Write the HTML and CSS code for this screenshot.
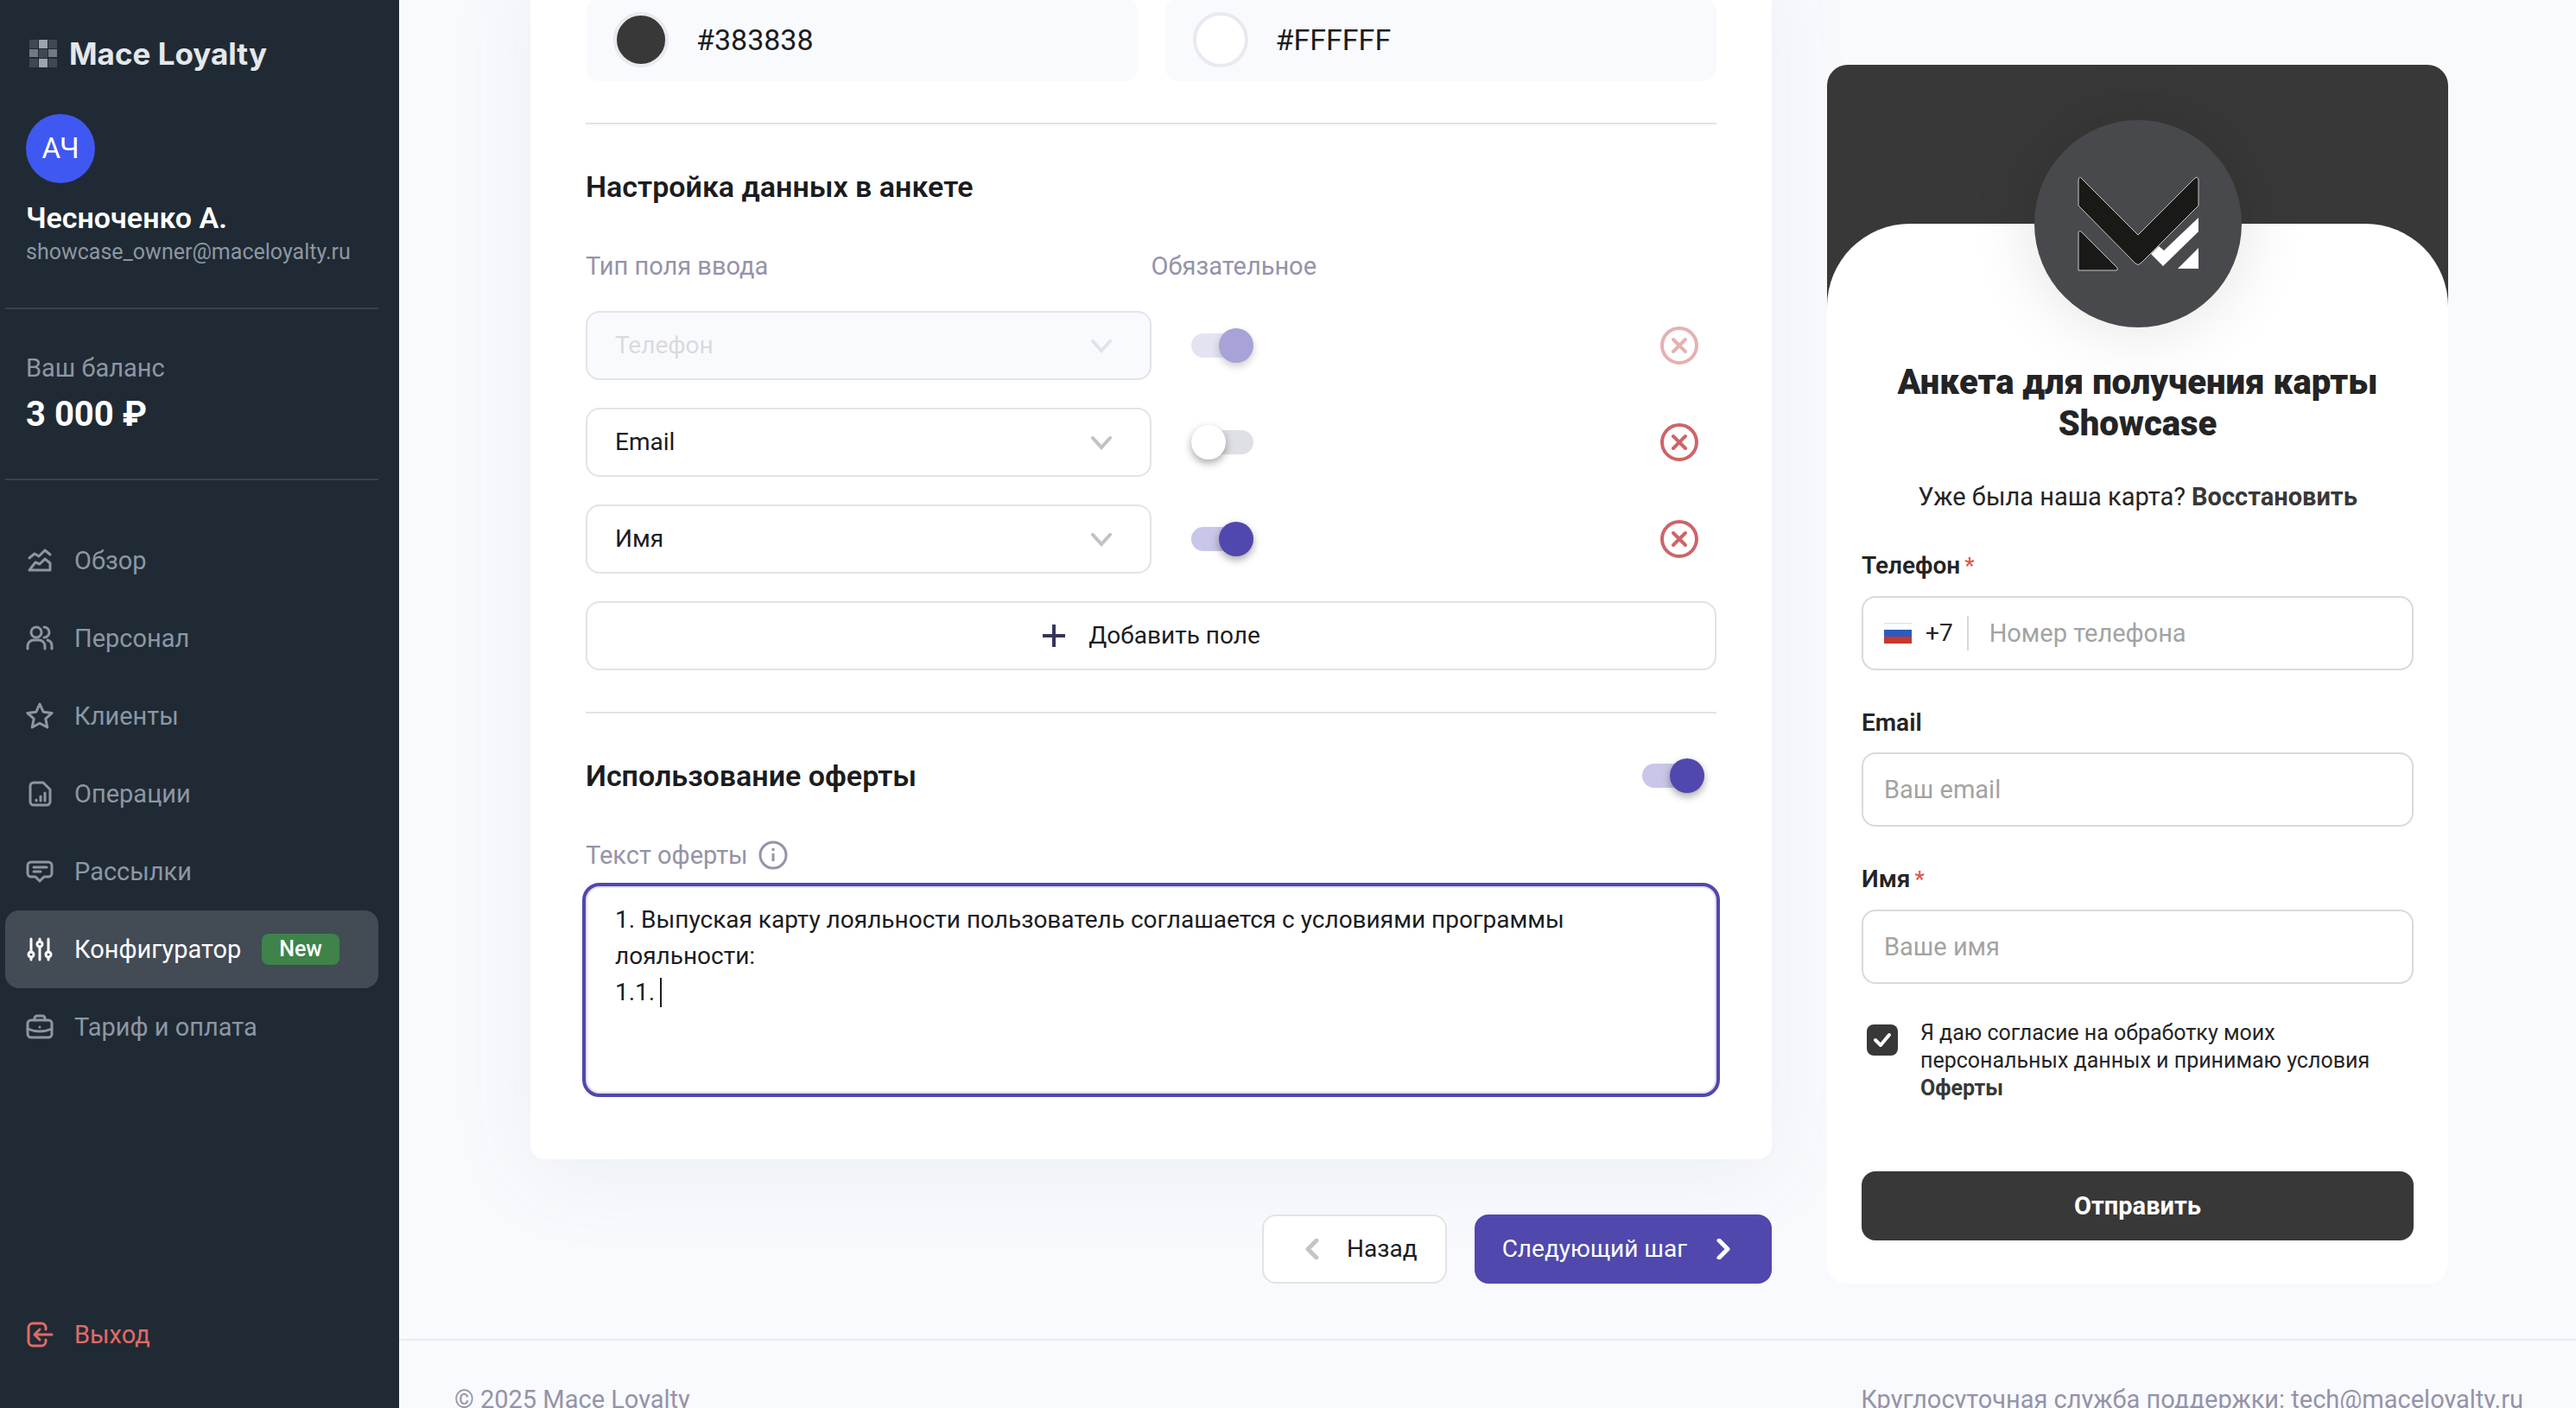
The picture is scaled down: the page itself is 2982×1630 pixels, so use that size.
FILE: index.html
```html
<!DOCTYPE html>
<html lang="ru">
<head>
    <meta charset="UTF-8">
    <meta name="viewport" content="width=device-width, initial-scale=1.0">
    <title>Mace Loyalty</title>
    <link rel="stylesheet" href="styles.css">
</head>
<body>
    <aside class="sidebar">
        <a href="#" class="logo">
            <svg width="32" height="32" viewBox="0 0 32 32">
                <g opacity="0.25">
                    <rect x="0" y="0" width="10" height="10"/>
                    <rect x="22" y="0" width="10" height="10"/>
                    <rect x="11" y="11" width="10" height="10"/>
                    <rect x="0" y="22" width="10" height="10"/>
                    <rect x="22" y="22" width="10" height="10"/>
                </g>
                <g opacity="0.65">
                    <rect x="0" y="11" width="10" height="9"/>
                    <rect x="22" y="11" width="10" height="9"/>
                </g>
                <rect x="11" y="0" width="10" height="10"/>
                <rect x="11" y="22" width="10" height="10"/>
            </svg>
            <span>Mace Loyalty</span>
        </a>

        <div class="profile">
            <div class="avatar">АЧ</div>
            <div class="profile-name">Чесноченко А.</div>
            <div class="profile-email">showcase_owner@maceloyalty.ru</div>
        </div>

        <div class="balance">
            <div class="balance-label">Ваш баланс</div>
            <div class="balance-value">3 000 ₽</div>
        </div>

        <nav class="menu">
            <a href="#" class="menu-item">
                <svg class="icon" viewBox="0 0 32 32"><path d="M4 13l6-5 5 3 7-7 6 5M4 27l7-9 5 2 6-6 6 5v8z"/></svg>
                <span>Обзор</span>
            </a>
            <a href="#" class="menu-item">
                <svg class="icon" viewBox="0 0 32 32"><circle cx="12" cy="9" r="6"/><path d="M2 28v-3a7 7 0 0 1 7-7h6a7 7 0 0 1 7 7v3M21 3a6 6 0 0 1 0 12M25 18a7 7 0 0 1 5 7v3"/></svg>
                <span>Персонал</span>
            </a>
            <a href="#" class="menu-item">
                <svg class="icon" viewBox="0 0 32 32"><path d="M16 2l4.200 9.200 10 1.200-7.400 6.800 2 9.800-8.800-4.800-8.800 4.800 2-9.800-7.400-6.800 10-1.200z"/></svg>
                <span>Клиенты</span>
            </a>
            <a href="#" class="menu-item">
                <svg class="icon" viewBox="0 0 32 32"><path d="M9 3h11l8 8v14a4 4 0 0 1-4 4H9a4 4 0 0 1-4-4V7a4 4 0 0 1 4-4zM12 23v1M17 19v5M22 15v9"/></svg>
                <span>Операции</span>
            </a>
            <a href="#" class="menu-item">
                <svg class="icon" viewBox="0 0 32 32"><path d="M6 5h20a4 4 0 0 1 4 4v9a4 4 0 0 1-4 4h-5l-5 5-5-5H6a4 4 0 0 1-4-4V9a4 4 0 0 1 4-4zM9 11h15M9 16h8"/></svg>
                <span>Рассылки</span>
            </a>
            <a href="#" class="menu-item active">
                <svg class="icon" viewBox="0 0 32 32"><path d="M6 4v15M16 13v15M26 4v15M6 25v3M26 25v3M16 4v3"/><circle cx="6" cy="22" r="3"/><circle cx="16" cy="10" r="3"/><circle cx="26" cy="22" r="3"/></svg>
                <span>Конфигуратор</span>
                <span class="badge">New</span>
            </a>
            <a href="#" class="menu-item">
                <svg class="icon" viewBox="0 0 32 32"><rect x="2" y="8" width="28" height="20" rx="4"/><path d="M10 8V6a3 3 0 0 1 3-3h6a3 3 0 0 1 3 3v2M2 18c9 4 19 4 28 0M16 16v0"/></svg>
                <span>Тариф и оплата</span>
            </a>
        </nav>

        <a href="#" class="menu-item logout">
            <svg class="icon" viewBox="0 0 32 32"><path d="M23 10V8a5 5 0 0 0-5-5H8a5 5 0 0 0-5 5v16a5 5 0 0 0 5 5h10a5 5 0 0 0 5-5v-2M30 16H11M16 10l-6 6 6 6"/></svg>
            <span>Выход</span>
        </a>
    </aside>

    <div class="page">
        <main class="content">
            <div class="editor">
                <section class="card">
                    <div class="colors">
                        <div class="color">
                            <span class="color-dot dark"></span>
                            <span>#383838</span>
                        </div>
                        <div class="color">
                            <span class="color-dot light"></span>
                            <span>#FFFFFF</span>
                        </div>
                    </div>

                    <div class="section">
                        <h2>Настройка данных в анкете</h2>
                        <div class="fields">
                            <div class="field-row field-head">
                                <span>Тип поля ввода</span>
                                <span>Обязательное</span>
                            </div>
                            <div class="field-row">
                                <div class="select">
                                    <select aria-label="Тип поля ввода" disabled><option>Телефон</option></select>
                                    <svg class="chevron" viewBox="0 0 24 16"><path d="M2 2l10 11L22 2"/></svg>
                                </div>
                                <input type="checkbox" class="switch" aria-label="Обязательное" checked disabled>
                                <button class="remove" aria-label="Удалить" disabled>
                                    <svg viewBox="0 0 44 44"><circle cx="22" cy="22" r="20"/><path d="M15 15l14 14M29 15L15 29"/></svg>
                                </button>
                            </div>
                            <div class="field-row">
                                <div class="select">
                                    <select aria-label="Тип поля ввода"><option>Email</option></select>
                                    <svg class="chevron" viewBox="0 0 24 16"><path d="M2 2l10 11L22 2"/></svg>
                                </div>
                                <input type="checkbox" class="switch" aria-label="Обязательное">
                                <button class="remove" aria-label="Удалить">
                                    <svg viewBox="0 0 44 44"><circle cx="22" cy="22" r="20"/><path d="M15 15l14 14M29 15L15 29"/></svg>
                                </button>
                            </div>
                            <div class="field-row">
                                <div class="select">
                                    <select aria-label="Тип поля ввода"><option>Имя</option></select>
                                    <svg class="chevron" viewBox="0 0 24 16"><path d="M2 2l10 11L22 2"/></svg>
                                </div>
                                <input type="checkbox" class="switch" aria-label="Обязательное" checked>
                                <button class="remove" aria-label="Удалить">
                                    <svg viewBox="0 0 44 44"><circle cx="22" cy="22" r="20"/><path d="M15 15l14 14M29 15L15 29"/></svg>
                                </button>
                            </div>
                            <button class="btn add">
                                <svg width="28" height="28" viewBox="0 0 28 28"><path d="M14 1v26M1 14h26" stroke="#353659"/></svg>
                                Добавить поле
                            </button>
                        </div>
                    </div>

                    <div class="section">
                        <div class="section-title">
                            <h2><label for="offer-on">Использование оферты</label></h2>
                            <input type="checkbox" class="switch" id="offer-on" checked>
                        </div>
                        <div class="offer-label">
                            <label for="offer">Текст оферты</label>
                            <svg width="34" height="34" viewBox="0 0 34 34"><circle cx="17" cy="17" r="15"/><path d="M17 15v9M17 9v3"/></svg>
                        </div>
                        <div class="offer-box">
                            <textarea id="offer">1. Выпуская карту лояльности пользователь соглашается с условиями программы лояльности:
1.1. </textarea>
                            <span class="caret"></span>
                        </div>
                    </div>
                </section>

                <div class="actions">
                    <button class="btn back">
                        <svg width="16" height="24" viewBox="0 0 16 24"><path d="M13 2L3 12l10 10" stroke="#c4c4cc"/></svg>
                        Назад
                    </button>
                    <button class="btn next">
                        Следующий шаг
                        <svg width="16" height="24" viewBox="0 0 16 24"><path d="M3 2l10 10L3 22" stroke="#fff"/></svg>
                    </button>
                </div>
            </div>

            <form class="preview">
                <div class="preview-header"></div>
                <div class="preview-body">
                    <div class="brand">
                        <svg viewBox="0 0 240 240">
                            <g fill="#191a18" stroke="#c9c9c9" stroke-width="1" stroke-linejoin="round">
                                <path d="M51 69q1-5 4-1l65 65 65-65q4-4 5 1v30l-67 67q-3 3-6 0L51 99z"/>
                                <path d="M51 130q1-3 3-1l42 42q1 3-1 3H51z"/>
                            </g>
                            <g fill="#fff">
                                <path d="M190 113v16l-41 40-14-14 9-9 6 5z"/>
                                <path d="M190 148v24h-24z"/>
                            </g>
                        </svg>
                    </div>
                    <h1>Анкета для получения карты Showcase</h1>
                    <p class="restore">Уже была наша карта? <a href="#">Восстановить</a></p>

                    <div class="form-field">
                        <label for="phone">Телефон<span class="star">*</span></label>
                        <div class="phone">
                            <svg width="32" height="24" viewBox="0 0 32 24"><path d="M0 0h32v1H0z" fill="#dcdce8"/><path d="M0 8h32v8H0z" fill="#2c5bbd"/><path d="M0 16h32v8H0z" fill="#c8372d"/></svg>
                            <span class="code">+7</span>
                            <input type="tel" id="phone" placeholder="Номер телефона">
                        </div>
                    </div>
                    <div class="form-field">
                        <label for="email">Email</label>
                        <input type="email" id="email" class="input" placeholder="Ваш email">
                    </div>
                    <div class="form-field">
                        <label for="name">Имя<span class="star">*</span></label>
                        <input type="text" id="name" class="input" placeholder="Ваше имя">
                    </div>

                    <div class="agree">
                        <span class="check">
                            <input type="checkbox" id="agree" checked>
                            <svg viewBox="0 0 36 36"><path d="M10 18l6 6 10-12"/></svg>
                        </span>
                        <label for="agree">Я даю согласие на обработку моих персональных данных и принимаю условия <a href="#">Оферты</a></label>
                    </div>

                    <button type="button" class="submit">Отправить</button>
                </div>
            </form>
        </main>

        <footer class="footer">
            <span>© 2025 Mace Loyalty</span>
            <span>Круглосуточная служба поддержки: <a href="mailto:tech@maceloyalty.ru">tech@maceloyalty.ru</a></span>
        </footer>
    </div>
</body>
</html>
```
FILE: styles.css
```css
* {
    box-sizing: border-box;
}
body {
    margin: 0;
    display: flex;
    height: 100vh;
    overflow: hidden;
    background-color: #f9fafe;
    color: #1b1c1e;
    font-family: Roboto, "Noto Sans", sans-serif;
    font-size: 28px;
    line-height: 32px;
}
a {
    color: inherit;
    text-decoration: none;
}
button, input, select, textarea {
    font: inherit;
    color: inherit;
}
h1, h2, p {
    margin: 0;
}
svg {
    display: block;
    fill: none;
    flex-shrink: 0;
}

/* sidebar */
.sidebar {
    width: 462px;
    flex-shrink: 0;
    height: 100vh;
    padding: 40px 24px 40px 6px;
    display: flex;
    flex-direction: column;
    background-color: #202a34;
    color: #8c97a3;
}
.logo {
    display: flex;
    align-items: center;
    gap: 14px;
    height: 44px;
    padding-left: 28px;
    color: #e4e7eb;
    font-family: Inter, sans-serif;
    font-size: 35px;
    font-weight: 700;
}
.logo svg {
    fill: #9aa5b1;
}
.profile {
    padding: 48px 0 48px 24px;
    border-bottom: 2px solid #37424c;
}
.avatar {
    display: flex;
    align-items: center;
    justify-content: center;
    width: 80px;
    height: 80px;
    border-radius: 50%;
    background-color: #4058f2;
    color: #fff;
    font-size: 33px;
}
.profile-name {
    margin-top: 20px;
    color: #fff;
    font-size: 34px;
    font-weight: 600;
    line-height: 40px;
}
.profile-email {
    margin-top: 4px;
    font-size: 25px;
}
.balance {
    padding: 48px 0 48px 24px;
    border-bottom: 2px solid #37424c;
}
.balance-label {
    line-height: 40px;
    font-size: 29px;
}
.balance-value {
    margin: 10px 0 2px;
    color: #fff;
    font-size: 40px;
    font-weight: 700;
    line-height: 48px;
}
.menu {
    margin-top: 48px;
}
.menu-item {
    display: flex;
    align-items: center;
    height: 90px;
    padding-left: 24px;
    border-radius: 16px;
    font-size: 29px;
}
.icon {
    width: 32px;
    height: 32px;
    margin-right: 24px;
    stroke: currentColor;
    stroke-width: 3;
    stroke-linecap: round;
    stroke-linejoin: round;
}
.menu-item.active {
    background-color: #434b55;
    color: #fff;
}
.badge {
    margin-left: 24px;
    padding: 0 20px;
    border-radius: 8px;
    background-color: #3f834a;
    font-size: 25px;
    font-weight: 500;
    line-height: 36px;
}
.logout {
    margin-top: auto;
    color: #e26a66;
}

/* main */
.page {
    flex: 1;
    min-width: 0;
}
.content {
    display: flex;
    align-items: flex-end;
    gap: 64px;
    max-width: 2224px;
    margin: -66px auto 0;
    padding-left: 4px;
}
.editor {
    flex: 1;
    min-width: 0;
}
.card {
    padding: 64px 64px 76px;
    border-radius: 16px;
    background-color: #fff;
    box-shadow: 0 20px 100px rgba(60, 100, 120, 0.08);
}
.colors {
    display: grid;
    grid-template-columns: 1fr 1fr;
    gap: 32px;
}
.color {
    display: flex;
    align-items: center;
    gap: 32px;
    height: 96px;
    padding: 0 32px;
    border-radius: 16px;
    background-color: #f9fafe;
    font-size: 34px;
}
.color-dot {
    width: 64px;
    height: 64px;
    border: 4px solid #e9e9ef;
    border-radius: 50%;
}
.dark {
    background-color: #383838;
}
.light {
    background-color: #fff;
}
.section {
    margin-top: 48px;
    padding-top: 52px;
    border-top: 2px solid #e3e3e5;
}
h2 {
    font-size: 34px;
    font-weight: 600;
    line-height: 40px;
}
.fields {
    display: flex;
    flex-direction: column;
    gap: 32px;
    margin-top: 56px;
}
.field-row {
    display: grid;
    grid-template-columns: 1fr 1fr;
    align-items: center;
    position: relative;
}
.field-head {
    margin-bottom: 4px;
    color: #9593a9;
    font-size: 29px;
}
.select {
    position: relative;
}
.select select {
    appearance: none;
    width: 100%;
    height: 80px;
    padding: 0 32px;
    border: 2px solid #e3e3e8;
    border-radius: 16px;
    background-color: #fff;
}
.select select:disabled {
    background-color: #f9fafe;
    color: #d9dade;
    opacity: 1;
}
.chevron {
    position: absolute;
    right: 46px;
    top: 33px;
    width: 24px;
    height: 16px;
    stroke: #c1c1c9;
    stroke-width: 4;
    stroke-linecap: round;
    pointer-events: none;
}
select:disabled + .chevron {
    opacity: 0.4;
}
.switch {
    appearance: none;
    position: relative;
    width: 72px;
    height: 28px;
    margin: 0 0 0 46px;
    border-radius: 14px;
    background-color: #dfdfe6;
}
.switch::before {
    content: "";
    position: absolute;
    left: 0;
    top: -6px;
    width: 40px;
    height: 40px;
    border-radius: 50%;
    background-color: #fff;
    box-shadow: 0 4px 10px rgba(0, 0, 0, 0.35);
}
.switch:checked {
    background-color: #c9c7e7;
}
.switch:checked::before {
    left: auto;
    right: 0;
    background-color: #5048ad;
}
.switch:disabled {
    background-color: #e4e3f1;
}
.switch:disabled::before {
    background-color: #a7a3d8;
    box-shadow: 0 4px 10px rgba(0, 0, 0, 0.2);
}
.remove {
    position: absolute;
    right: 21px;
    width: 44px;
    height: 44px;
    padding: 0;
    border: none;
    background: none;
}
.remove svg {
    stroke: #ce6468;
    stroke-width: 4;
    stroke-linecap: round;
}
.remove:disabled {
    opacity: 0.5;
}
.btn {
    display: flex;
    align-items: center;
    justify-content: center;
    height: 80px;
    border: 2px solid #e3e3e5;
    border-radius: 16px;
    background-color: #fff;
    color: #1b1c1e;
}
.btn svg {
    stroke-width: 5;
    stroke-linecap: round;
    stroke-linejoin: round;
}
.add {
    gap: 26px;
}
.add svg {
    stroke-width: 4;
    stroke-linecap: butt;
}
.section-title {
    display: flex;
    align-items: center;
    justify-content: space-between;
}
.section-title .switch {
    margin-right: 14px;
}
.offer-label {
    display: flex;
    align-items: center;
    gap: 12px;
    height: 32px;
    margin-top: 56px;
    color: #9593a9;
    font-size: 29px;
}
.offer-label svg {
    stroke: #9593a9;
    stroke-width: 3;
}
.offer-box {
    position: relative;
    margin-top: 20px;
}
textarea {
    display: block;
    width: 100%;
    height: 240px;
    padding: 16px 100px 16px 32px;
    border: 2px solid #e0dff0;
    border-radius: 16px;
    outline: 4px solid #5048ad;
    background-color: #fff;
    line-height: 42px;
    resize: none;
}
.caret {
    position: absolute;
    left: 86px;
    top: 106px;
    width: 2px;
    height: 34px;
    background-color: #1b1c1e;
}
.actions {
    display: flex;
    justify-content: flex-end;
    gap: 32px;
    margin-top: 64px;
}
.back {
    gap: 32px;
    padding: 0 32px 0 48px;
}
.next {
    gap: 34px;
    padding: 0 46px 0 30px;
    border-color: #5048ad;
    background-color: #5048ad;
    color: #fff;
}

/* preview of the form */
.preview {
    width: 719px;
    border-radius: 24px;
    background: linear-gradient(#383838 300px, #fff 300px);
    overflow: hidden;
    color: #242424;
}
.preview-header {
    height: 184px;
}
.preview-body {
    display: flex;
    flex-direction: column;
    padding: 0 40px 50px;
    border-radius: 96px 96px 0 0;
    background-color: #fff;
}
.brand {
    align-self: center;
    width: 240px;
    height: 240px;
    margin-top: -120px;
    border-radius: 50%;
    background-color: #48494c;
    box-shadow: 0 0 80px rgba(0, 0, 0, 0.12);
}
h1 {
    margin-top: 40px;
    padding: 0 40px;
    font-size: 40px;
    font-weight: 900;
    line-height: 48px;
    text-align: center;
}
.restore {
    margin: 44px 0;
    font-size: 29px;
    text-align: center;
}
.restore a, .agree a {
    color: #383838;
    font-weight: 700;
}
.form-field {
    margin-bottom: 41px;
}
.form-field > label {
    display: block;
    margin: 4px 0 18px;
    font-size: 28px;
    font-weight: 600;
}
.star {
    margin-left: 5px;
    color: #e0574f;
    font-size: 25px;
}
.input, .phone {
    display: flex;
    align-items: center;
    width: 100%;
    height: 86px;
    padding: 0 24px;
    border: 2px solid #d9d9db;
    border-radius: 16px;
    background-color: #fff;
}
.phone input {
    flex: 1;
    min-width: 0;
    height: 40px;
    padding: 0 0 0 24px;
    border: none;
    border-left: 2px solid #d9d9db;
}
.input, .phone input {
    font-size: 29px;
}
.code {
    padding: 0 16px;
}
::placeholder {
    color: #a3a3a3;
    opacity: 1;
}
.agree {
    display: flex;
    gap: 26px;
    padding-left: 6px;
    font-size: 25px;
}
.check {
    position: relative;
    width: 36px;
    height: 36px;
    margin-top: 6px;
    flex-shrink: 0;
}
.check input {
    appearance: none;
    display: block;
    width: 36px;
    height: 36px;
    margin: 0;
    border-radius: 8px;
    background-color: #383838;
}
.check svg {
    position: absolute;
    left: 0;
    top: 0;
    stroke: #fff;
    stroke-width: 4;
    stroke-linecap: round;
    stroke-linejoin: round;
    pointer-events: none;
}
.submit {
    height: 80px;
    margin-top: 80px;
    border: none;
    border-radius: 16px;
    background-color: #383838;
    color: #fff;
    font-size: 29px;
    font-weight: 700;
}

.footer {
    display: flex;
    justify-content: space-between;
    margin-top: 64px;
    padding: 52px 61px 52px 64px;
    border-top: 2px solid #ebecf1;
    color: #9593a9;
    font-size: 29px;
}
```
